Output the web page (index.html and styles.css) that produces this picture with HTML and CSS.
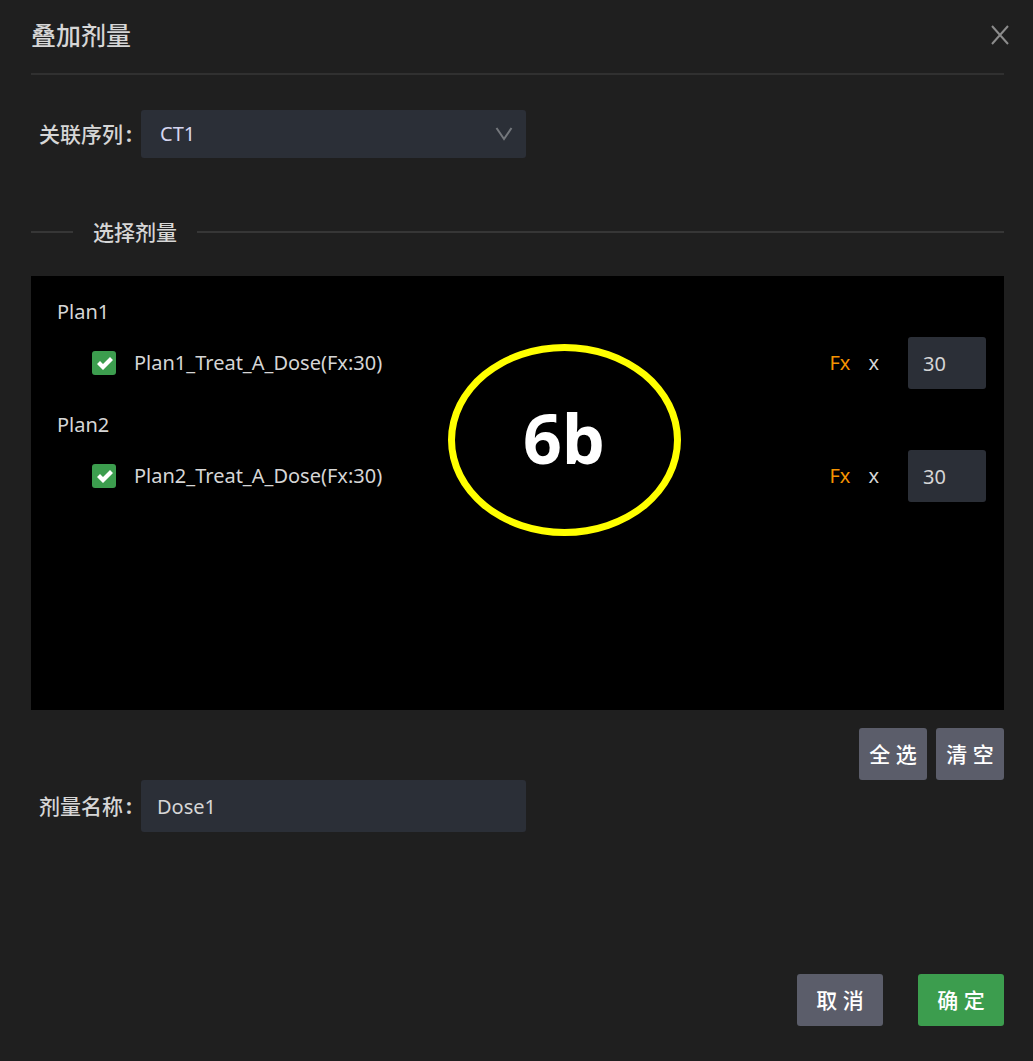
FILE: index.html
```html
<!DOCTYPE html>
<html lang="zh-CN">
<head>
<meta charset="utf-8">
<meta name="viewport" content="width=device-width, initial-scale=1">
<title>叠加剂量</title>
<link rel="stylesheet" href="styles.css">
</head>
<body>
<main class="dialog">
  <header class="header">
    <h1 class="title">叠加剂量</h1>
    <button class="close" type="button" aria-label="关闭">
      <svg width="18" height="20" viewBox="0 0 18 20"><path d="M1 1 17 19M17 1 1 19"/></svg>
    </button>
  </header>

  <form class="form">
    <div class="field">
      <label class="label" for="series">关联序列<span class="colon">:</span></label>
      <div class="select-wrap">
        <select class="control select" id="series"><option>CT1</option></select>
        <svg class="chevron" width="18" height="14" viewBox="0 0 18 14"><path d="M1.500 1 9 12 16.500 1"/></svg>
      </div>
    </div>

    <h2 class="divider">选择剂量</h2>

    <section class="panel">
      <h3 class="plan">Plan1</h3>
      <div class="dose">
        <input class="check" type="checkbox" id="dose1" checked>
        <label class="dose-name" for="dose1">Plan1_Treat_A_Dose(Fx:30)</label>
        <label class="fx" for="fx1">Fx</label>
        <span class="times">x</span>
        <input class="control count" id="fx1" type="text" value="30">
      </div>
      <h3 class="plan">Plan2</h3>
      <div class="dose">
        <input class="check" type="checkbox" id="dose2" checked>
        <label class="dose-name" for="dose2">Plan2_Treat_A_Dose(Fx:30)</label>
        <label class="fx" for="fx2">Fx</label>
        <span class="times">x</span>
        <input class="control count" id="fx2" type="text" value="30">
      </div>
      <div class="callout">6b</div>
    </section>

    <div class="tools">
      <button class="btn btn-small" type="button">全 选</button>
      <button class="btn btn-small" type="button">清 空</button>
    </div>

    <div class="field">
      <label class="label" for="name">剂量名称<span class="colon">:</span></label>
      <input class="control name" id="name" type="text" value="Dose1">
    </div>

    <footer class="footer">
      <button class="btn" type="button">取 消</button>
      <button class="btn btn-primary" type="submit">确 定</button>
    </footer>
  </form>
</main>
</body>
</html>
```
FILE: styles.css
```css
* {
  box-sizing: border-box;
}

body {
  margin: 0;
  background: #1f1f1f;
  color: #d6d6d6;
  font: 21px/32px "Noto Sans", "Noto Sans CJK SC", sans-serif;
}

.dialog {
  min-height: 100vh;
  padding: 0 29px 35px 31px;
  display: flex;
  flex-direction: column;
}

.header {
  height: 75px;
  padding-bottom: 4px;
  border-bottom: 2px solid #303030;
  display: flex;
  align-items: center;
  justify-content: space-between;
}

.title {
  margin: 0;
  font-size: 25px;
  font-weight: 500;
}

.close {
  margin-right: -5px;
  padding: 0;
  border: 0;
  background: none;
  display: flex;
}

.close svg,
.chevron {
  fill: none;
  stroke: #8c8c8c;
  stroke-width: 2;
}

.form {
  flex: 1;
  padding-top: 35px;
  display: flex;
  flex-direction: column;
}

.field {
  padding-left: 8px;
  display: flex;
  align-items: center;
}

.label {
  width: 102px;
  font-weight: 500;
}

.colon {
  padding-left: 3px;
  font-weight: 700;
}

.control {
  border: 0;
  border-radius: 3px;
  background: #2b2f37;
  color: #d6d6d6;
  font: inherit;
  font-size: 20px;
}

.select-wrap {
  position: relative;
  width: 385px;
}

.select {
  display: block;
  width: 100%;
  height: 48px;
  padding: 0 19px;
  appearance: none;
  color: #d6d6f0;
}

.chevron {
  position: absolute;
  top: 17px;
  right: 13px;
  stroke: #74777c;
  pointer-events: none;
}

.divider {
  margin: 58px 0 28px;
  display: flex;
  align-items: center;
  gap: 20px;
  font-size: 21px;
  font-weight: 500;
}

.divider::before,
.divider::after {
  content: "";
  height: 2px;
  background: #363636;
}

.divider::before {
  width: 42px;
}

.divider::after {
  flex: 1;
}

.panel {
  position: relative;
  min-height: 434px;
  padding: 20px 18px 20px 26px;
  background: #000;
}

.plan {
  margin: 0;
  font-size: 20px;
  font-weight: 400;
}

.dose {
  margin: 9px 0 20px;
  padding-left: 35px;
  display: flex;
  align-items: center;
  font-size: 20px;
}

.check {
  width: 24px;
  height: 24px;
  margin: 0 18px 0 0;
  border-radius: 3px;
  appearance: none;
  background: #3c9d4e;
}

.check:checked::before {
  content: "";
  display: block;
  height: 24px;
  background: #fff;
  clip-path: polygon(5px 13px, 8px 10px, 11px 13px, 18px 6px, 21px 9px, 11px 19px);
}

.dose-name {
  flex: 1;
}

.fx {
  color: #f59300;
}

.times {
  padding: 0 29px 0 18px;
}

.count {
  width: 78px;
  height: 52px;
  padding: 0 15px;
}

.callout {
  position: absolute;
  top: 68px;
  left: calc(50% - 70px);
  width: 233px;
  height: 192px;
  padding-bottom: 4px;
  border: 7px solid #ff0;
  border-radius: 50%;
  display: grid;
  place-items: center;
  color: #fff;
  font-size: 68px;
  font-weight: 700;
}

.tools {
  padding-top: 18px;
  display: flex;
  justify-content: flex-end;
  gap: 9px;
}

.btn {
  min-width: 86px;
  height: 52px;
  padding: 0 8px;
  border: 0;
  border-radius: 3px;
  background: #5b5d6a;
  color: #fff;
  font: inherit;
  font-weight: 500;
}

.btn-small {
  min-width: 68px;
}

.btn-primary {
  background: #3c9d4e;
}

.name {
  width: 385px;
  height: 52px;
  padding: 0 16px;
}

.footer {
  margin-top: auto;
  display: flex;
  justify-content: flex-end;
  gap: 35px;
}
```
